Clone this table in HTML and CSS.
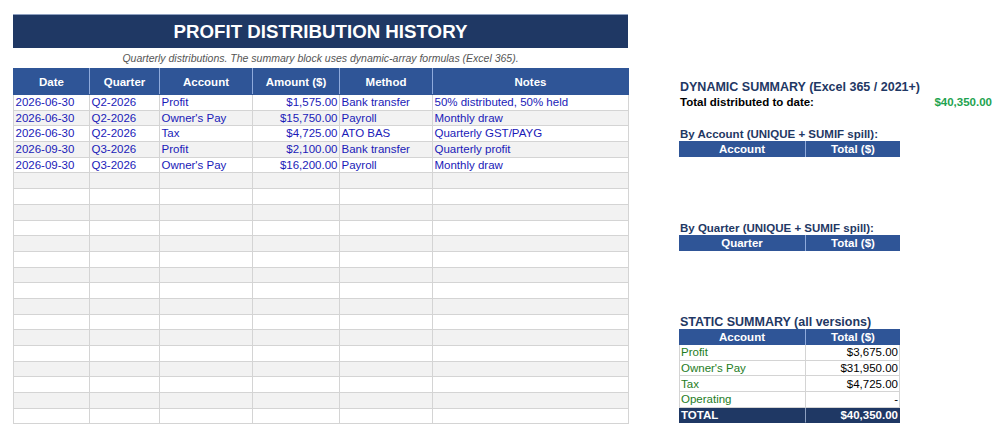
FILE: index.html
```html
<!DOCTYPE html>
<html>
<head>
<meta charset="utf-8">
<link rel="stylesheet" href="styles.css">
</head>
<body>
<div class="page">
  <section class="history">
    <div class="title">PROFIT DISTRIBUTION HISTORY</div>
    <div class="subtitle">Quarterly distributions. The summary block uses dynamic-array formulas (Excel 365).</div>
    <table class="grid">
      <colgroup>
        <col class="w-date"><col class="w-quarter"><col class="w-account"><col class="w-amount"><col class="w-method"><col class="w-notes">
      </colgroup>
      <thead>
        <tr><th>Date</th><th>Quarter</th><th>Account</th><th>Amount ($)</th><th>Method</th><th>Notes</th></tr>
      </thead>
      <tbody>
        <tr><td>2026-06-30</td><td>Q2-2026</td><td>Profit</td><td class="num">$1,575.00</td><td>Bank transfer</td><td>50% distributed, 50% held</td></tr>
        <tr><td>2026-06-30</td><td>Q2-2026</td><td>Owner's Pay</td><td class="num">$15,750.00</td><td>Payroll</td><td>Monthly draw</td></tr>
        <tr><td>2026-06-30</td><td>Q2-2026</td><td>Tax</td><td class="num">$4,725.00</td><td>ATO BAS</td><td>Quarterly GST/PAYG</td></tr>
        <tr><td>2026-09-30</td><td>Q3-2026</td><td>Profit</td><td class="num">$2,100.00</td><td>Bank transfer</td><td>Quarterly profit</td></tr>
        <tr><td>2026-09-30</td><td>Q3-2026</td><td>Owner's Pay</td><td class="num">$16,200.00</td><td>Payroll</td><td>Monthly draw</td></tr>
        <tr><td></td><td></td><td></td><td></td><td></td><td></td></tr>
        <tr><td></td><td></td><td></td><td></td><td></td><td></td></tr>
        <tr><td></td><td></td><td></td><td></td><td></td><td></td></tr>
        <tr><td></td><td></td><td></td><td></td><td></td><td></td></tr>
        <tr><td></td><td></td><td></td><td></td><td></td><td></td></tr>
        <tr><td></td><td></td><td></td><td></td><td></td><td></td></tr>
        <tr><td></td><td></td><td></td><td></td><td></td><td></td></tr>
        <tr><td></td><td></td><td></td><td></td><td></td><td></td></tr>
        <tr><td></td><td></td><td></td><td></td><td></td><td></td></tr>
        <tr><td></td><td></td><td></td><td></td><td></td><td></td></tr>
        <tr><td></td><td></td><td></td><td></td><td></td><td></td></tr>
        <tr><td></td><td></td><td></td><td></td><td></td><td></td></tr>
        <tr><td></td><td></td><td></td><td></td><td></td><td></td></tr>
        <tr><td></td><td></td><td></td><td></td><td></td><td></td></tr>
        <tr><td></td><td></td><td></td><td></td><td></td><td></td></tr>
        <tr><td></td><td></td><td></td><td></td><td></td><td></td></tr>
      </tbody>
    </table>
  </section>

  <section class="summary">
    <div class="row heading tall">DYNAMIC SUMMARY (Excel 365 / 2021+)</div>
    <div class="row total-line"><span>Total distributed to date:</span><span class="green">$40,350.00</span></div>
    <div class="row"></div>
    <div class="row subheading">By Account (UNIQUE + SUMIF spill):</div>
    <div class="row mini-head"><span class="c1">Account</span><span class="c2">Total ($)</span></div>
    <div class="row"></div><div class="row"></div><div class="row"></div><div class="row"></div>
    <div class="row subheading">By Quarter (UNIQUE + SUMIF spill):</div>
    <div class="row mini-head"><span class="c1">Quarter</span><span class="c2">Total ($)</span></div>
    <div class="row"></div><div class="row"></div><div class="row"></div><div class="row"></div>
    <div class="row heading">STATIC SUMMARY (all versions)</div>
    <div class="row mini-head"><span class="c1">Account</span><span class="c2">Total ($)</span></div>
    <div class="row static"><span class="c1 label">Profit</span><span class="c2 val">$3,675.00</span></div>
    <div class="row static"><span class="c1 label">Owner's Pay</span><span class="c2 val">$31,950.00</span></div>
    <div class="row static"><span class="c1 label">Tax</span><span class="c2 val">$4,725.00</span></div>
    <div class="row static"><span class="c1 label">Operating</span><span class="c2 val">-</span></div>
    <div class="row static grand"><span class="c1">TOTAL</span><span class="c2 val">$40,350.00</span></div>
  </section>
</div>
</body>
</html>
```

FILE: styles.css
```css
* { box-sizing: border-box; }
html, body { margin: 0; padding: 0; background: #ffffff; }
body {
  font-family: "Liberation Sans", Arial, sans-serif;
  font-size: 11.5px;
  color: #000;
  --rh: 15.7px;
}
.page {
  display: flex;
  align-items: flex-start;
  padding-left: 13px;
  padding-top: 14px;
}
.history { width: 615px; }
.title {
  height: 34px;
  background: #1f3864;
  color: #fff;
  font-weight: bold;
  font-size: 18.7px;
  display: flex;
  align-items: center;
  justify-content: center;
  border-top: 1px solid #8ea0c0;
}
.subtitle {
  height: 20px;
  display: flex;
  align-items: center;
  justify-content: center;
  font-style: italic;
  font-size: 10.5px;
  color: #555;
}
.grid {
  border-collapse: collapse;
  table-layout: fixed;
  width: 615px;
}
.w-date { width: 76px; }
.w-quarter { width: 70px; }
.w-account { width: 93px; }
.w-amount { width: 87px; }
.w-method { width: 93px; }
.w-notes { width: 196px; }
.grid th {
  background: #2f5597;
  color: #fff;
  font-weight: bold;
  height: 26px;
  padding: 0;
  text-align: center;
  border: 1px solid #8faadc;
  border-top-color: #2f5597;
  border-bottom-color: #2f5597;
}
.grid th:first-child { border-left-color: #2f5597; }
.grid th:last-child { border-right-color: #2f5597; }
.grid td {
  height: var(--rh);
  padding: 0 1.5px 0 1.5px;
  border: 1px solid #d4d4d4;
  color: #1a1ab8;
  white-space: nowrap;
  overflow: hidden;
  line-height: 13px;
}
.grid td.num { text-align: right; }
.grid tbody tr:nth-child(even) td { background: #f2f2f2; }

.summary {
  margin-left: 51px;
  margin-top: 54px;
  width: 313px;
  display: flex;
  flex-direction: column;
}
.row {
  height: var(--rh);
  display: flex;
  align-items: center;
  white-space: nowrap;
}
.row.tall { height: 26px; }
.heading {
  font-weight: bold;
  font-size: 12.5px;
  color: #1f3864;
  padding-left: 1px;
  align-items: flex-end;
  line-height: 14px;
}
.subheading {
  font-weight: bold;
  font-size: 11.5px;
  color: #1f3864;
  padding-left: 1px;
  align-items: flex-end;
  line-height: 13px;
}
.total-line {
  justify-content: space-between;
  font-weight: bold;
  padding-left: 1px;
  padding-right: 0;
}
.green { color: #1ea34f; }
.c1 { width: 127px; height: 100%; display: flex; align-items: center; }
.c2 { width: 94px; height: 100%; display: flex; align-items: center; }
.mini-head .c1, .mini-head .c2 {
  background: #2f5597;
  color: #fff;
  font-weight: bold;
  justify-content: center;
}
.mini-head .c1 { border-right: 1px solid #8faadc; }
.static .c1, .static .c2 {
  border-right: 1px solid #d4d4d4;
  border-bottom: 1px solid #d4d4d4;
}
.static .c1 { border-left: 1px solid #d4d4d4; padding-left: 1px; }
.static .label { color: #1e7d1e; }
.static .val { justify-content: flex-end; padding-right: 1px; }
.grand .c1, .grand .c2 {
  background: #1f3864;
  color: #fff;
  font-weight: bold;
  border-color: #1f3864;
}
.grand .c1 { border-right-color: #8ea0c0; }
```
